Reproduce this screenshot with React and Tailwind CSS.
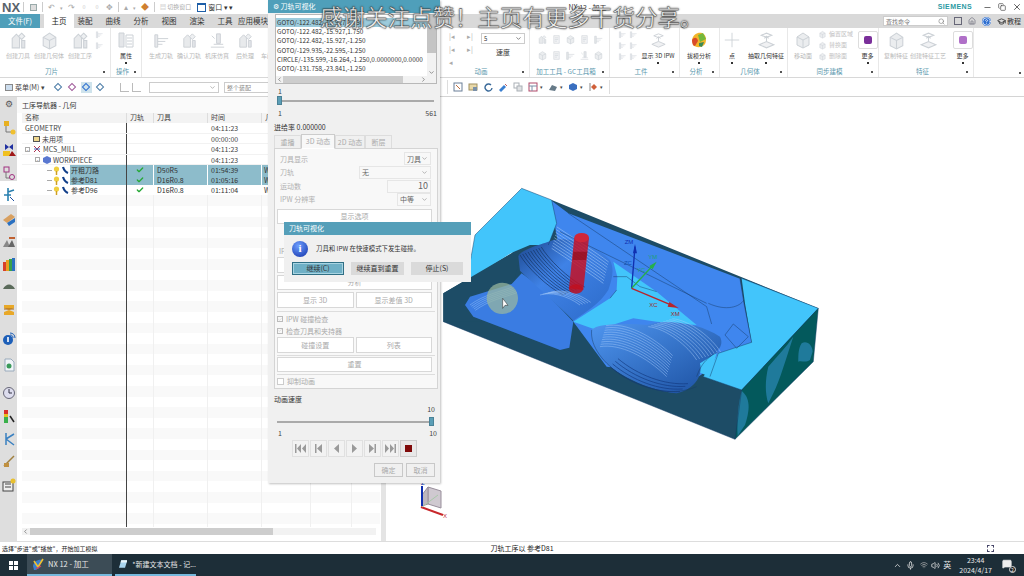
import { ChevronUp, Mic, Wifi, Volume2, MessageSquare, Minus, X, Copy, Search, HelpCircle, Home, GraduationCap, ChevronDown, ChevronLeft, ChevronRight, Check } from 'lucide-react';

const FONT = 'font-["Noto_Sans_CJK_SC","Noto_Sans",sans-serif]';

// pale disabled ribbon glyphs
function Glyph({ kind = 'tool', size = 20 }) {
    const c = '#ccd1d6';
    return (
        <svg width={size} height={size} viewBox="0 0 20 20" fill="none" stroke={c} strokeWidth="1">
            {kind === 'tool' && <><path d="M4 17V8l4-4 3 3v10z" fill="#e8eaec" /><path d="M13 3l3 3-3 3-3-3z" fill="#eef0f2" /><path d="M13 10v7h3v-7z" fill="#e2e5e8" /></>}
            {kind === 'box' && <><path d="M4 7l6-4 6 4v8l-6 3-6-3z" fill="#ebedef" /><path d="M4 7l6 3 6-3M10 10v8" /></>}
            {kind === 'cut' && <><path d="M3 4h3v13H3z" fill="#e6e8eb" /><path d="M6 8h11M6 11h8M6 14h5" /></>}
            {kind === 'sim' && <><path d="M9 3h4v10H9z" fill="#e4e6e9" /><path d="M3 17h14M6 14h10" /><path d="M4 5l3 3" /></>}
            {kind === 'doc' && <><path d="M5 3h10v14H5z" fill="#f2f3f5" /><path d="M7 7h6M7 10h6M7 13h4" /></>}
            {kind === 'plus' && <path d="M10 2v16M2 10h16" />}
            {kind === 'lift' && <><path d="M3 14l7-3 7 3-7 3z" fill="#f0f1f3" /><path d="M10 11V6M8 8l2-2 2 2" /><path d="M5 5l5-2 5 2-5 2z" /></>}
            {kind === 'prop' && <><path d="M3 3h5v14H3z" fill="#e4e6e9" /><path d="M10 5h7v12h-7z" /><path d="M11 8h5M11 11h5M11 14h5" /></>}
        </svg>
    );
}

function Big({ w, label, kind, size, off, arrow, children }) {
    return (
        <div className="flex flex-col items-center shrink-0 h-full pt-[1px]" style={{ width: w }}>
            <div className="h-[22px] flex items-center justify-center">{children || <Glyph kind={kind} size={size} />}</div>
            <div className={`text-[6px] leading-[9px] whitespace-nowrap ${off ? 'text-[#b8b8b8]' : 'text-[#333]'}`}>{label}</div>
            {arrow && <div className="w-[2px] h-[2px] bg-[#333] mt-[2px]" />}
        </div>
    );
}

function Section({ w, label, children, wide }) {
    return (
        <div className="flex flex-col shrink-0 h-full border-r border-[#e8e8e8]" style={{ width: w }}>
            <div className="h-[38px] flex items-start">{children}</div>
            <div className="h-[11px] flex items-center relative">
                <span className={`flex-1 text-center text-[6.5px] leading-[9px] text-[#5a97ad] ${wide ? 'whitespace-nowrap' : ''}`}>{label}</span>
                <span className="w-[2px] h-[2px] bg-[#555] mr-[5px]" />
            </div>
        </div>
    );
}

function MoreBox({ color }) {
    return (
        <div className="w-[20px] h-[18px] border border-[#ddd] rounded-[2px] flex items-center justify-center">
            <div className="w-[8px] h-[8px] rounded-[2px]" style={{ background: color }} />
        </div>
    );
}

function SmallCol({ n = 3 }) {
    return (
        <div className="flex flex-col gap-[2px] pt-[2px]">
            {Array.from({ length: n }).map((_, i) => (<Glyph key={i} kind="cut" size={9} />))}
        </div>
    );
}

function Ribbon() {
    return (
        <div className="h-[50px] bg-white flex border-b border-[#d8d8d8]">
            <Section w={111} label="刀片">
                <div className="w-[3px]" />
                <Big w={30} label="创建刀具" kind="tool" size={21} off />
                <Big w={32} label="创建几何体" kind="box" size={21} off />
                <Big w={30} label="创建工序" kind="tool" size={21} off />
                <SmallCol n={2} />
            </Section>
            <Section w={31} label="操作">
                <Big w={30} label="属性" kind="prop" size={20} arrow />
            </Section>
            <Section w={298} label="工序">
                <div className="w-[5px]" />
                <Big w={28} label="生成刀轨" kind="cut" size={19} off />
                <Big w={28} label="确认刀轨" kind="tool" size={19} off />
                <Big w={28} label="机床仿真" kind="sim" size={19} off />
                <Big w={28} label="后处理" kind="tool" size={19} off />
                <Big w={28} label="车间文档" kind="doc" size={19} off />
            </Section>
            <Section w={90} label="动画">
                <div className="w-[11px] pt-[2px] text-[#aaa] text-[7px] leading-[13px] ml-[9px]">|◂<br />|◂<br />◂</div>
                <div className="w-[12px] pt-[2px] text-[#aaa] text-[7px] leading-[13px] ml-[7px]">▸|<br />▸|</div>
                <div className="flex flex-col items-center ml-[2px] pt-[5px]">
                    <div className="w-[44px] h-[11px] border border-[#ccc] flex items-center justify-between px-[2px] text-[6px] text-[#333]">5<ChevronDown size={7} /></div>
                    <div className="text-[7px] text-[#333] mt-[3px]">速度</div>
                </div>
            </Section>
            <Section w={80} label="加工工具 - GC工具箱" wide>
                <div className="grid grid-cols-5 gap-x-[3px] gap-y-[5px] pl-[7px] pt-[6px]">
                    {['tool', 'doc', 'box', 'doc', 'cut', 'box', 'doc', 'cut', 'sim', 'box'].map((k, i) => (<Glyph key={i} kind={k} size={11} />))}
                </div>
            </Section>
            <Section w={70} label="工件">
                <div className="flex flex-col ml-[8px]"><SmallCol /></div>
                <div className="flex flex-col ml-[2px]"><SmallCol /></div>
                <Big w={40} label="显示 3D IPW" kind="lift" size={19} arrow />
            </Section>
            <Section w={40} label="分析">
                <Big w={38} label="拔模分析" arrow>
                    <svg width="18" height="18" viewBox="0 0 18 18">
                        <path d="M2 9C3 3 8 1 12 2c4 2 5 6 3 11-3 4-9 4-12 1z" fill="#f2b52a" />
                        <path d="M2 9c2-3 5-3 6 1l-3 5c-2 0-3-3-3-6z" fill="#d94b2b" />
                        <path d="M8 4l5-2 3 6-6 3z" fill="#74b83c" />
                        <path d="M9 12l5-1-2 5-3-1z" fill="#3a8a58" />
                    </svg>
                </Big>
            </Section>
            <Section w={68} label="几何体">
                <Big w={24} label="点" kind="plus" size={18} arrow />
                <Big w={44} label="抽取几何特征" kind="lift" size={21} arrow />
            </Section>
            <Section w={91} label="同步建模">
                <Big w={30} label="移动面" kind="box" size={20} off />
                <div className="flex flex-col gap-[1px] pt-[1px] w-[40px]">
                    {['偏置区域', '替换面', '删除面'].map((t) => (
                        <div key={t} className="flex items-center gap-[2px] text-[6px] leading-[10px] text-[#c4c4c4] whitespace-nowrap"><Glyph kind="box" size={9} />{t}</div>
                    ))}
                </div>
                <Big w={21} label="更多" arrow><MoreBox color="#7a2f9a" /></Big>
            </Section>
            <Section w={95} label="特征">
                <Big w={34} label="复制特征" kind="box" size={21} off />
                <Big w={30} label="创建特征工艺" kind="lift" size={21} off />
                <div className="w-[10px]" />
                <Big w={21} label="更多" arrow><MoreBox color="#b070c8" /></Big>
            </Section>
            <div className="flex-1 flex items-end justify-end pr-[3px] pb-[3px]"><span className="w-[2px] h-[2px] bg-[#555]" /></div>
        </div>
    );
}

function Top() {
    return (
        <>
            <div className="h-[14px] bg-white flex items-center relative">
                <span className='font-["Liberation_Sans",sans-serif] font-bold text-[13px] text-[#59636b] ml-[2px] w-[19px] leading-none'>NX</span>
                <div className="w-px h-[10px] bg-[#ccc] ml-[2px]" />
                <div className="flex items-center gap-[5px] ml-[6px] text-[#aaa] text-[8px] leading-none">
                    <span className="w-[7px] h-[7px] border border-[#9aa] bg-[#ddd]" />
                    <div className="w-px h-[10px] bg-[#ccc]" />
                    <span>↶</span><span className="text-[5px]">▾</span><span>↷</span><span>▫</span><span>▫</span><span>✥</span>
                    <div className="w-px h-[10px] bg-[#ccc]" />
                    <span>▴</span><span className="text-[5px]">▾</span><span className="text-[#d08030]">◆</span>
                    <div className="w-px h-[10px] bg-[#ccc]" />
                    <span className="text-[6px] whitespace-nowrap">▤ 切换窗口</span>
                </div>
                <span className="w-[9px] h-[9px] border border-[#1d5ea8] border-t-2 ml-[6px]" />
                <span className="text-[7px] text-[#333] ml-[2px] whitespace-nowrap">窗口 ▾ ▾</span>
                <span className="text-[7px] text-[#333] ml-[335px] whitespace-nowrap">NX 12 - 加工</span>
                <span className='font-["Liberation_Sans",sans-serif] font-bold text-[7px] tracking-[0.4px] text-[#2a9aa3] ml-auto mr-[11px]'>SIEMENS</span>
                <Minus size={9} className="text-[#444] mr-[6px]" />
                <Copy size={8} className="text-[#444] mr-[6px]" />
                <X size={10} className="text-[#444] mr-[2px]" />
            </div>
            <div className="h-[14px] bg-[#d9d9d9] flex items-stretch text-[7.5px] text-[#333]">
                <div className="w-[40px] bg-[#4f9fba] text-white flex items-center justify-center">文件(F)</div>
                <div className="w-[30px] ml-[4px] mr-[-3px] bg-white text-[#222] flex items-center justify-center">主页</div>
                {['装配', '曲线', '分析', '视图', '渲染', '工具', '应用模块'].map((t) => (
                    <div key={t} className="w-[28px] flex items-center justify-center whitespace-nowrap">{t}</div>
                ))}
                <div className="ml-auto flex items-center pr-[3px] gap-[6px]">
                    <div className="w-[65px] h-[10px] bg-white border border-[#ccc] flex items-center justify-between px-[2px] text-[6px] text-[#777]">查找命令<Search size={7} /></div>
                    <span className="w-[8px] h-[8px] border border-[#667]" />
                    <Home size={8} className="text-[#667]" />
                    <HelpCircle size={9} className="text-white bg-[#2f6fd0] rounded-full" />
                    <span className="flex items-center gap-[1px] text-[7px]"><GraduationCap size={9} className="text-[#222]" />教程</span>
                </div>
            </div>
        </>
    );
}

// right-hand view toolbar glyphs
const VIEW_ICONS = [
    { arrow: false, draw: <><rect x="1" y="1" width="8" height="8" fill="none" stroke="#6a7f98" /><path d="M3 3l4 4" stroke="#c07040" /></> },
    { arrow: false, draw: <><rect x="1" y="2" width="8" height="6" fill="#e8d8a8" stroke="#a09060" /><rect x="5" y="5" width="4" height="4" fill="#7a90a8" /></> },
    { arrow: false, draw: <path d="M8 3a3.5 3.5 0 1 0 1 3" fill="none" stroke="#3a6a9a" strokeWidth="1.4" /> },
    { arrow: false, draw: <><path d="M1 8l5-5 2 2-5 5z" fill="#3a7fd0" /><path d="M7 2l2 2" stroke="#c06060" /></> },
    { arrow: false, draw: <><rect x="1" y="1" width="5" height="5" fill="none" stroke="#aab0b6" /><rect x="4" y="4" width="5" height="5" fill="#e0e2e4" stroke="#aab0b6" /></> },
    { arrow: true, draw: <><rect x="1" y="1" width="8" height="8" fill="none" stroke="#b04a6a" /><path d="M1 4h8M4 4v5" stroke="#7a90a8" /></> },
    { arrow: true, draw: <path d="M1 8l3-5 5 2-2 4z" fill="#667a88" /> },
    { arrow: true, draw: <path d="M5 1l4 2v4l-4 2-4-2V3z" fill="#3a6fc0" /> },
    { arrow: true, draw: <><path d="M2 1v8" stroke="#888" /><path d="M3 5l3-3 3 3-3 3z" fill="#d0603a" /></> },
];

function Toolbar() {
    const ic = ['#4a7ba6', '#a05a9a', '#2f6fd0', '#4a7ba6'];
    return (
        <div className="h-[19px] bg-white flex items-center border-b border-[#d4d4d4] text-[7px] text-[#444]">
            <span className="ml-[5px] flex items-center gap-[2px] whitespace-nowrap"><span className="w-[8px] h-[7px] border border-[#888] bg-[#cde]" />菜单(M) ▾</span>
            <div className="flex items-center gap-[3px] ml-[8px]">
                {ic.map((c, i) => (
                    <span key={i} className={`w-[11px] h-[11px] flex items-center justify-center ${i === 2 ? 'bg-[#cfe3ec]' : ''}`}><span className="w-[6px] h-[6px] rotate-45 border" style={{ borderColor: c }} /></span>
                ))}
                <div className="w-[8px]" />
                <span className="w-[9px] h-[9px] border-l border-b border-[#bbb]" />
                <span className="w-[9px] h-[9px] border-l border-b border-[#bbb]" />
            </div>
            <div className="w-[70px] h-[11px] border border-[#ccc] ml-[8px] flex items-center justify-end pr-[2px]"><ChevronDown size={7} className="text-[#888]" /></div>
            <div className="w-[46px] h-[11px] border border-[#ccc] ml-[5px] text-[6px] px-[2px] text-[#888] leading-[9px]">整个装配</div>
            <div className="ml-[177px] flex items-center gap-[5px]">
                <div className="w-px h-[14px] bg-[#ddd]" />
                {VIEW_ICONS.map((ico, i) => (
                    <span key={i} className="flex items-center gap-[2px]">
                        <svg width="10" height="10" viewBox="0 0 10 10">{ico.draw}</svg>
                        {ico.arrow && <span className="text-[5px]">▾</span>}
                    </span>
                ))}
            </div>
            <div className="w-px h-[14px] bg-[#ddd] ml-[6px]" />
        </div>
    );
}

// left rail of small resource icons
function RailIcon({ i }) {
    const draw = [
        <><rect x="2" y="1" width="5" height="5" fill="#e8b020" /><path d="M4 6v6h5" stroke="#777" fill="none" /><circle cx="11" cy="12" r="2.5" fill="#f0c030" /></>,
        <><path d="M3 1l4 3 4-3v6l-4-3-4 3z" fill="#2030a0" /><rect x="1" y="8" width="7" height="5" fill="#f0c020" /><path d="M7 13l3-5 4 5z" fill="#a01818" /></>,
        <><rect x="2" y="1" width="5" height="5" fill="none" stroke="#a03080" /><path d="M4 6v6h4" stroke="#777" fill="none" /><circle cx="10" cy="11" r="2.5" fill="none" stroke="#a03080" /></>,
        <><path d="M6 1v13M6 5l6-2M2 8h7" stroke="#2a80b0" strokeWidth="1.6" fill="none" /><path d="M8 10l4 4" stroke="#2050a0" fill="none" /></>,
        <><path d="M1 8l8-6 4 3-8 6z" fill="#d8a060" /><path d="M5 11l8-5v4l-6 4z" fill="#2a70c0" /></>,
        <><path d="M1 13l4-7 3 7z" fill="#888" /><path d="M6 13l4-7 3 7z" fill="#666" /><path d="M7 4h6" stroke="#c06030" strokeWidth="2" /></>,
        <><rect x="1" y="5" width="3" height="9" fill="#d8402a" /><rect x="4" y="3" width="3" height="11" fill="#e8a020" /><rect x="7" y="2" width="3" height="12" fill="#3aa04a" /><rect x="10" y="1" width="3" height="13" fill="#2a70c0" /></>,
        <path d="M1 10c3-6 9-6 12 0z" fill="#5a6a5a" />,
        <><path d="M2 2h10v3L7 7l5 2v3H2V9l5-2-5-2z" fill="#e8a828" /><path d="M2 6h10" stroke="#a06018" /></>,
        <><circle cx="6" cy="9" r="5" fill="#1d5fb8" /><path d="M6 6v5" stroke="#fff" strokeWidth="1.6" /><path d="M8 2c3 0 5 2 5 5M8 4c2 0 3 1 3 3" stroke="#1d5fb8" fill="none" /></>,
        <><path d="M3 1h6l3 3v9H3z" fill="#f0f4f8" stroke="#9ab" /><circle cx="7" cy="8" r="2.5" fill="#3a9a5a" /></>,
        <><circle cx="7" cy="7" r="5.5" fill="#dde" stroke="#667" /><path d="M7 3v4h3" stroke="#334" fill="none" /></>,
        <><path d="M2 1h4v13H2z" fill="#3ab04a" /><path d="M2 1h4v4H2z" fill="#d8302a" /><path d="M2 5h4v3H2z" fill="#e8c020" /><path d="M8 7l4 6" stroke="#222" strokeWidth="1.5" /></>,
        <><path d="M4 1v12M4 7l8-5M4 7l8 6" stroke="#3a80c0" strokeWidth="1.5" fill="none" /></>,
        <><path d="M2 12l6-6 4-4" stroke="#a08040" strokeWidth="1.5" fill="none" /><path d="M2 9h5v4H2z" fill="#c09040" /></>,
        <><rect x="1" y="4" width="10" height="9" fill="#eee" stroke="#444" /><path d="M3 6h6M3 9h6" stroke="#444" /><circle cx="11" cy="3" r="2.5" fill="#e8c030" /></>,
    ][i];
    return <svg width="14" height="15" viewBox="0 0 14 15">{draw}</svg>;
}

function Rail() {
    const gaps = [135, 158, 181, 205, 227, 249, 272, 294, 318, 346, 373, 401, 424, 447, 469, 493];
    return (
        <div className="w-[17px] shrink-0 bg-[#dedede] flex flex-col items-center">
            <div className="h-[13px] flex items-center text-[#555] text-[9px] leading-none">⚙</div>
            {gaps.map((y, i) => (
                <div key={y} className={`w-full flex items-end justify-center ${i === 3 ? 'bg-white pb-[3px]' : ''}`} style={{ height: i === 0 ? y - 110 : y - gaps[i - 1] }}>
                    <RailIcon i={i} />
                </div>
            ))}
        </div>
    );
}

const OPS = [
    { name: '开粗刀路', tool: 'D50R5', time: '01:54:39', sel: true },
    { name: '参考D81', tool: 'D16R0.8', time: '01:05:16', sel: true },
    { name: '参考D96', tool: 'D16R0.8', time: '01:11:04', sel: false },
];
const COLS = 'grid grid-cols-[105px_27px_54px_54px_49px_41px_1fr]';

function Tree({ label, time, indent, icon, minus }) {
    return (
        <div className={`${COLS} h-[10.6px] text-[7px] leading-[10px] text-[#444] border-b border-[#f2f2f2]`}>
            <div className="border-r border-[#444] flex items-center whitespace-nowrap" style={{ paddingLeft: indent }}>
                {minus && <span className="w-[5px] h-[5px] border border-[#aaa] flex items-center justify-center text-[5px] leading-none mr-[3px]">-</span>}
                {icon}
                <span className="ml-[2px]">{label}</span>
            </div>
            <div /><div />
            <div className="pl-[3px]">{time}</div>
        </div>
    );
}

function OpRow({ op }) {
    const cell = op.sel ? 'bg-[#8dbccb]' : '';
    return (
        <div className={`${COLS} h-[10.6px] text-[7px] leading-[10px] text-[#333] gap-x-0`}>
            <div className="border-r border-[#444] flex items-center pl-[25px]">
                <span className="w-[5px] h-px bg-[#aaa]" />
                <svg width="7" height="9" viewBox="0 0 7 9" className="ml-[1px]"><circle cx="3.5" cy="3" r="2.6" fill="#f0d040" /><path d="M3.5 5v4" stroke="#d0a020" strokeWidth="1.5" /></svg>
                <svg width="8" height="9" viewBox="0 0 8 9" className="ml-[1px] mr-[1px]"><path d="M2 1c1 3 2 5 5 6" stroke="#123f8a" strokeWidth="2.2" fill="none" /></svg>
                <span className={`flex-1 self-stretch pl-[1px] whitespace-nowrap ${cell}`}>{op.name}</span>
            </div>
            <div className={`flex items-center justify-center border-r border-white ${cell}`}><Check size={8} strokeWidth={4} className="text-[#27a838]" /></div>
            <div className={`pl-[3px] border-r border-white ${cell}`}>{op.tool}</div>
            <div className={`pl-[3px] border-r border-white ${cell}`}>{op.time}</div>
            <div className={`pl-[2px] ${cell}`}>W</div>
            <div className={cell} /><div className={cell} />
        </div>
    );
}

function Navigator() {
    return (
        <div className="w-[364px] shrink-0 bg-white flex flex-col">
            <div className="h-[16px] pl-[5px] flex items-center text-[7px] text-[#333] bg-[#fafafa]">工序导航器 - 几何</div>
            <div className="pl-[5px] pr-[1px] flex-1 flex flex-col overflow-hidden">
                <div className={`${COLS} h-[10px] text-[7px] leading-[9px] text-[#444] bg-[#f3f3f3] shrink-0`}>
                    {['名称', '刀轨', '刀具', '时间', '几何', '方法', ''].map((t, i) => (
                        <div key={i} className="pl-[3px] border-r border-[#ddd] whitespace-nowrap">{t}</div>
                    ))}
                </div>
                <Tree label="GEOMETRY" time="04:11:23" indent={1} />
                <Tree label="未用项" time="00:00:00" indent={11} icon={<span className="w-[7px] h-[6px] bg-[#f0d890] border border-[#555]" />} />
                <Tree label="MCS_MILL" time="04:11:23" indent={3} minus icon={<svg width="8" height="8" viewBox="0 0 8 8"><path d="M1 1l6 6M1 7l6-6" stroke="#b03050" /><path d="M1 4h6" stroke="#3a70c0" /></svg>} />
                <Tree label="WORKPIECE" time="04:11:23" indent={13} minus icon={<svg width="8" height="8" viewBox="0 0 8 8"><path d="M4 0l4 2v4L4 8 0 6V2z" fill="#5a78d0" /></svg>} />
                {OPS.map((op) => (<OpRow key={op.name} op={op} />))}
                {Array.from({ length: 32 }).map((_, i) => (
                    <div key={i} className={`${COLS} h-[10.6px] shrink-0 ${i % 2 ? 'bg-white' : 'bg-[#f9f9f9]'}`}>
                        <div className="border-r border-[#444]" /><div className="border-r border-[#f0f0f0]" /><div className="border-r border-[#f0f0f0]" /><div className="border-r border-[#f0f0f0]" /><div className="border-r border-[#f0f0f0]" /><div className="border-r border-[#f0f0f0]" />
                    </div>
                ))}
            </div>
            <div className="h-[7px] mx-[5px] mt-[1px] mb-[6px] bg-[#f2f2f2] flex items-center">
                <ChevronLeft size={7} className="text-[#555]" />
                <div className="h-full w-[243px] bg-[#cdcdcd] ml-[1px]" />
            </div>
        </div>
    );
}

function Model() {
    const ridge = (d, n, dx, dy, col, w = 1) => Array.from({ length: n }).map((_, i) => (
        <path key={i} d={d} transform={`translate(${i * dx} ${i * dy})`} stroke={col} strokeWidth={w} fill="none" />
    ));
    return (
        <svg className="w-full h-full block" viewBox="386 97 638 444">
            <defs>
                <linearGradient id="moundA" x1="0" y1="0" x2="1" y2="1"><stop offset="0" stopColor="#1c468c" /><stop offset=".4" stopColor="#3f82e6" /><stop offset="1" stopColor="#2c6ac8" /></linearGradient>
                <linearGradient id="moundB" x1="0" y1="0" x2="1" y2="1"><stop offset="0" stopColor="#4f96f0" /><stop offset="1" stopColor="#1b4f9f" /></linearGradient>
            </defs>
            <g transform="translate(440 180) scale(0.3333)">
                {/* block faces */}
                <path d="M10 340 L215 220 L335 60 L1135 385 L885 778 L10 425Z" fill="#1d4c66" />
                <path d="M335 62 L385 100 L900 296 L912 370 L935 487 L860 530 L775 590 L500 560 L400 425 L345 140Z" fill="#3f86ee" />
                <path d="M245 25 L335 60 L350 130 L325 195 L270 195 L215 218 L80 305 L105 165Z" fill="#42c5fb" />
                <path d="M905 295 L1135 385 L905 630 L790 590 L812 560 L835 520 L935 487 L915 370Z" fill="#42c5fb" />
                <path d="M520 245 L650 335 L770 435 L650 425 L580 415 L470 450 L400 425 L510 355 L530 330 L532 290Z" fill="#42c5fb" />
                <path d="M775 540 L830 520 L808 590 L775 575Z" fill="#42c5fb" />
                <path d="M1135 385 L1120 545 L885 778 L905 630Z" fill="#03595c" />
                <path d="M905 632 C925 650 935 675 915 735 L893 768 C890 720 895 670 905 632Z" fill="#1f7a9b" />
                <path d="M985 560 C1010 530 1040 500 1060 470 C1040 530 1020 600 1000 640 L985 670 C975 640 975 600 985 560Z" fill="#1f7a9b" />
                <path d="M1085 490 C1100 480 1118 495 1118 515 L1110 540 C1095 550 1085 540 1075 545 C1075 525 1075 505 1085 490Z" fill="#1f7a9b" />
                {/* left pocket */}
                <path d="M10 340 L215 220 L240 235 L220 310 L85 365 L75 375 L100 410 L360 510 L385 505 L400 425 L10 425Z" fill="#1d4c66" />
                <path d="M75 375 L90 350 L215 312 L245 280 L300 320 L400 425 L388 503 L360 510 L100 410Z" fill="#3a7ce2" />
                {ridge('M90 375 C130 345 180 335 215 322', 5, 4, 4, '#8dbcf7', 1.6)}
                {/* mound one */}
                <path d="M235 228 C250 205 300 195 340 180 C400 170 470 200 510 240 C525 270 515 300 505 330 C480 370 440 395 400 422 C360 380 280 310 240 272Z" fill="url(#moundA)" />
                {ridge('M240 225 C260 260 320 320 370 345', 9, 8, -3, '#12305f', 2)}
                {ridge('M335 205 C380 235 450 280 490 310', 9, 2, -8, '#a9cdfa', 1.6)}
                {ridge('M300 345 C330 335 380 345 420 375', 5, 8, -2, '#9fc6f8', 1.6)}
                {/* mound two */}
                <path d="M455 450 C470 430 560 430 620 435 C680 415 780 430 840 470 C855 500 830 520 780 550 C790 590 760 630 710 640 C620 630 520 580 480 530 C460 500 452 480 455 450Z" fill="url(#moundB)" />
                {ridge('M480 500 C540 490 620 530 680 590', 10, 2, -7, '#9cc5f8', 1.5)}
                {ridge('M625 440 C680 445 745 500 770 540', 9, 9, -3, '#a9cdfa', 1.4)}
                {ridge('M510 560 C570 610 650 640 720 635', 4, 8, -8, '#123a80', 2)}
                {/* edge lines */}
                <g stroke="#163a66" strokeWidth="1.4" fill="none">
                    <path d="M245 25 L105 165 L80 305 M245 25 L335 60 L350 130 L325 195" />
                    <path d="M385 100 L800 380 L815 432 M360 155 L800 370" />
                    <path d="M905 295 L1135 385 L905 630 L790 590" />
                    <path d="M900 296 L912 370 L935 487 L835 520 L810 590" />
                    <path d="M855 465 L880 432 L925 470 L890 505Z" />
                    <path d="M805 370 C860 395 900 380 912 360" />
                    <path d="M10 425 L885 778 L1120 545 L1135 385 M885 778 L905 630" />
                    <path d="M520 290 L560 290 L600 320 L650 335 M510 355 L530 330" />
                    <path d="M770 590 C790 530 830 520 835 515" />
                    <path d="M455 450 C450 500 490 550 550 590 C620 630 700 650 770 620" />
                </g>
                {/* tool */}
                <path d="M403 173 L447 173 L430 330 L387 325Z" fill="#c90d1f" opacity=".82" />
                <path d="M400 215 L442 215 L438 240 L398 240Z" fill="#8c0a18" opacity=".6" />
                <ellipse cx="425" cy="173" rx="22" ry="14" fill="#d0263a" />
                <ellipse cx="408" cy="327" rx="21" ry="14" fill="#c01020" opacity=".85" />
                {/* axes */}
                <path d="M575 325 L585 200" stroke="#1030b0" strokeWidth="4" />
                <path d="M585 192 L579 220 L591 220Z" fill="#1030b0" />
                <path d="M575 325 L640 255" stroke="#26b04a" strokeWidth="4" />
                <path d="M650 245 L628 258 L638 268Z" fill="#26b04a" />
                <path d="M575 325 L700 378" stroke="#b8242c" strokeWidth="4" />
                <path d="M716 384 L688 366 L683 380Z" fill="#b8242c" />
                <g className='font-["Liberation_Sans",sans-serif]' fontSize="18">
                    <text x="554" y="192" fill="#1030b0">ZM</text>
                    <text x="552" y="254" fill="#1050b0">ZC</text>
                    <text x="625" y="236" fill="#20a078">YM</text>
                    <text x="590" y="275" fill="#20a078">YC</text>
                    <text x="628" y="380" fill="#a02a30">XC</text>
                    <text x="692" y="408" fill="#a02a30">XM</text>
                </g>
                {/* mouse highlight */}
                <circle cx="187" cy="355" r="47" fill="#9ab8a0" opacity=".72" />
                <path d="M188 355 L188 385 L195 376 L204 376Z" fill="#fff" stroke="#222" strokeWidth="1.5" />
            </g>
            {/* view triad */}
            <path d="M428 487 L441 491 L441 508 L428 504Z" fill="#cfc9d0" stroke="#998f9c" />
            <path d="M428 487 L422 495 L422 506 L428 504Z" fill="#bdb7be" stroke="#998f9c" />
            <path d="M422 506 L422 486" stroke="#1030b0" strokeWidth="2" />
            <path d="M421 507 L443 515" stroke="#c8282c" strokeWidth="2" />
            <path d="M422 507 L438 495" stroke="#a8c8a8" />
            <text x="443" y="518" fontSize="6" fill="#c03038" className='font-["Liberation_Sans",sans-serif]'>X</text>
            <text x="421" y="485" fontSize="6" fill="#1030b0" className='font-["Liberation_Sans",sans-serif]'>Z</text>
        </svg>
    );
}

function PlainBtn({ label, className = '' }) {
    return <div className={`h-[16px] border border-[#d8d8d8] bg-white flex items-center justify-center text-[7px] text-[#aaa] ${className}`}>{label}</div>;
}

function FieldRow({ label, boxW, value, select }) {
    return (
        <div className="h-[14px] flex items-center justify-between pl-[3px] pr-[4px] text-[7px] text-[#b0b0b0]">
            <span>{label}</span>
            <div className="h-[13px] border border-[#e6e6e6] flex items-center justify-between px-[2px] text-[#666]" style={{ width: boxW }}>
                <span className={select ? '' : 'ml-auto text-[9px]'}>{value}</span>
                {select && <ChevronDown size={7} className="text-[#888]" />}
            </div>
        </div>
    );
}

function Slider({ atEnd }) {
    return (
        <div className="relative h-[9px] ml-[9px] mr-[6px] flex items-center">
            <div className="h-[2px] w-full bg-[#aaa]" />
            <div className={`absolute top-0 w-[5px] h-[9px] bg-[#5b9eb6] border border-[#4a8297] ${atEnd ? 'right-0' : 'left-0'}`} />
        </div>
    );
}

function MediaBtn({ d, stop }) {
    return (
        <div className={`w-[17px] h-[17px] border flex items-center justify-center ${stop ? 'border-[#ccc] bg-[#e8e8e8]' : 'border-[#e0e0e0] bg-[#f2f2f2]'}`}>
            {stop
                ? <span className="w-[7px] h-[7px] bg-[#7f0a0a]" />
                : <svg width="11" height="9" viewBox="0 0 11 9" fill="#9a9a9a">{d}</svg>}
        </div>
    );
}

function PlayerDialog() {
    const lines = ['GOTO/-122.482,-15.927,2.750', 'GOTO/-122.482,-15.927,1.750', 'GOTO/-122.482,-15.927,-1.250', 'GOTO/-129.935,-22.595,-1.250', 'CIRCLE/-135.599,-16.264,-1.250,0.0000000,0.0000', 'GOTO/-131.758,-23.841,-1.250'];
    const media = [
        <><path d="M0 0h1.5v9H0zM6 0v9L2 4.5zM11 0v9L7 4.5z" /></>,
        <><path d="M2 0h1.5v9H2zM9 0v9L4 4.5z" /></>,
        <path d="M8 0v9L3 4.5z" />,
        <path d="M3 0v9l5-4.5z" />,
        <path d="M2 0v9l5-4.5zM7.5 0H9v9H7.5z" />,
        <path d="M0 0v9l4-4.5zM5 0v9l4-4.5zM9.5 0H11v9H9.5z" />,
    ];
    return (
        <div className={`absolute left-[268px] top-0 w-[172px] h-[483px] bg-[#f0f0f0] flex flex-col ${FONT} shadow-[1px_1px_2px_rgba(0,0,0,.25)]`}>
            <div className="h-[13px] bg-[#4f9fba] flex items-center text-[7px] text-white pl-[5px] gap-[3px] shrink-0">⚙ 刀轨可视化</div>
            <div className="mx-[7px] mt-[1px] mr-[3px] h-[70px] bg-white border border-[#b8b8b8] flex flex-col shrink-0">
                <div className="flex flex-1 min-h-0">
                    <div className="flex-1 overflow-hidden pt-[3px]">
                        {lines.map((l, i) => (
                            <div key={l} className={`h-[9.2px] text-[6.4px] leading-[9px] whitespace-nowrap text-[#333] pl-[1px] ${i === 0 ? 'bg-[#9ccbdc]' : ''}`}>{l}</div>
                        ))}
                    </div>
                    <div className="w-[9px] bg-[#f2f2f2] flex flex-col items-center">
                        <div className="w-full h-[38px] bg-[#c4c4c4]" />
                        <ChevronDown size={7} className="mt-auto text-[#555]" />
                    </div>
                </div>
                <div className="h-[7px] bg-[#f2f2f2] flex items-center justify-between">
                    <ChevronLeft size={7} className="text-[#555]" />
                    <div className="h-full w-[120px] bg-[#cdcdcd] mr-auto" />
                    <ChevronRight size={7} className="text-[#555] mr-[9px]" />
                </div>
            </div>
            <div className="pl-[10px] text-[7px] leading-[9px] mt-[3px] text-[#444]">1</div>
            <Slider />
            <div className="flex justify-between pl-[10px] pr-[3px] text-[7px] leading-[9px] text-[#444] mt-[4px]"><span>1</span><span>561</span></div>
            <div className="pl-[6px] mt-[5px] text-[7px] leading-[9px] text-[#333]">进给率 0.000000</div>
            <div className="flex ml-[6px] mt-[2px] h-[15px] text-[7px] text-[#aaa] shrink-0">
                <div className="w-[27px] mt-[1px] border border-[#ddd] flex items-center justify-center">重播</div>
                <div className="w-[34px] border border-[#ccc] border-b-white bg-[#f8f8f8] z-10 flex items-center justify-center whitespace-nowrap">3D 动态</div>
                <div className="w-[30px] mt-[1px] border border-[#ddd] flex items-center justify-center whitespace-nowrap">2D 动态</div>
                <div className="w-[27px] mt-[1px] border border-[#ddd] flex items-center justify-center">断层</div>
            </div>
            <div className="ml-[6px] mr-[2px] -mt-px h-[241px] border border-[#d4d4d4] bg-[#f8f8f8] flex flex-col px-[2px] pt-[3px] shrink-0">
                <FieldRow label="刀具显示" boxW={27} value="刀具" select />
                <FieldRow label="刀轨" boxW={72} value="无" select />
                <FieldRow label="运动数" boxW={44} value="10" />
                <FieldRow label="IPW 分辨率" boxW={34} value="中等" select />
                <PlainBtn label="显示选项" className="mt-[2px] mr-[3px]" />
                <div className="h-[22px]" />
                <div className="h-[12px] pl-[2px] text-[7px] text-[#aaa]">IPW 碰撞</div>
                <PlainBtn label="" className="mr-[3px]" />
                <PlainBtn label="分析" className="mt-[2px] mr-[3px]" />
                <div className="flex gap-[2px] mt-[2px] mr-[3px]"><PlainBtn label="显示 3D" className="flex-1" /><PlainBtn label="显示差值 3D" className="flex-1" /></div>
                <div className="h-px bg-[#ddd] mt-[3px]" />
                <div className="h-[12px] mt-[1px] flex items-center gap-[3px] text-[7px] text-[#aaa]"><span className="w-[6px] h-[6px] border border-[#bbb] flex items-center justify-center"><Check size={5} /></span>IPW 碰撞检查</div>
                <div className="h-[12px] flex items-center gap-[3px] text-[7px] text-[#aaa]"><span className="w-[6px] h-[6px] border border-[#bbb] flex items-center justify-center"><Check size={5} /></span>检查刀具和夹持器</div>
                <div className="flex gap-[2px] mr-[3px]"><PlainBtn label="碰撞设置" className="flex-1" /><PlainBtn label="列表" className="flex-1" /></div>
                <div className="h-px bg-[#ddd] mt-[2px]" />
                <PlainBtn label="重置" className="mt-[1px] mr-[3px]" />
                <div className="h-px bg-[#ddd] mt-[2px]" />
                <div className="h-[13px] flex items-center gap-[3px] text-[7px] text-[#aaa]"><span className="w-[7px] h-[7px] border border-[#ccc] bg-white" />抑制动画</div>
            </div>
            <div className="pl-[6px] mt-[6px] text-[7px] leading-[9px] text-[#333]">动画速度</div>
            <div className="text-right pr-[5px] mt-[1px] text-[7px] leading-[9px] text-[#444]">10</div>
            <div className="mt-[3px]"><Slider atEnd /></div>
            <div className="flex justify-between pl-[10px] pr-[3px] text-[7px] leading-[9px] text-[#444] mt-[3px]"><span>1</span><span>10</span></div>
            <div className="flex justify-center gap-px mt-[2px]">
                {media.map((d, i) => (<MediaBtn key={i} d={d} />))}
                <MediaBtn stop />
            </div>
            <div className="flex justify-end gap-[3px] pr-[5px] mt-[6px]">
                {['确定', '取消'].map((t) => (
                    <div key={t} className="w-[29px] h-[14px] border border-[#c8c8c8] flex items-center justify-center text-[7px] text-[#aaa]">{t}</div>
                ))}
            </div>
        </div>
    );
}

function AlertDialog() {
    return (
        <div className={`absolute left-[284px] top-[222px] w-[187px] h-[60px] bg-[#f0f0f0] flex flex-col ${FONT}`}>
            <div className="h-[13px] bg-[#559fb9] text-white text-[7px] flex items-center pl-[5px]">刀轨可视化</div>
            <div className="flex items-center h-[27px] pl-[8px] gap-[8px]">
                <span className='w-[16px] h-[16px] rounded-full bg-[radial-gradient(circle_at_40%_30%,#6fa0ff,#0f2fa8)] text-white text-[11px] font-bold font-["Liberation_Serif",serif] flex items-center justify-center leading-none'>i</span>
                <span className="text-[6.4px] text-[#333] whitespace-nowrap">刀具和 IPW 在快速模式下发生碰撞。</span>
            </div>
            <div className="flex pl-[8px] gap-[7px] text-[7px] text-[#333]">
                <div className="w-[52px] h-[13px] bg-[#6fb0c6] border border-[#2f6f85] shadow-[inset_0_0_0_1px_#a8d4e2] flex items-center justify-center">继续(C)</div>
                <div className="w-[53px] h-[13px] bg-[#dadada] flex items-center justify-center whitespace-nowrap">继续直到重置</div>
                <div className="w-[52px] h-[13px] bg-[#dadada] flex items-center justify-center">停止(S)</div>
            </div>
        </div>
    );
}

function Taskbar() {
    return (
        <div className="h-[22px] bg-[#1d2e38] flex items-stretch text-[7.5px] text-[#e8e8e8]">
            <div className="w-[27px] flex items-center justify-center">
                <div className="grid grid-cols-2 gap-px w-[9px]">
                    <span className="h-[4px] bg-white" /><span className="h-[4px] bg-white" /><span className="h-[4px] bg-white" /><span className="h-[4px] bg-white" />
                </div>
            </div>
            <div className="w-[85px] bg-[#3c4c56] border-b-2 border-[#76b9dd] flex items-center pl-[5px] gap-[3px]">
                <svg width="13" height="13" viewBox="0 0 13 13"><path d="M1 8c1-5 5-7 10-6-2 1-3 3-3 5 0 3-3 5-6 5z" fill="#3a7fd0" /><path d="M2 3l4 6 5-8" stroke="#f0c030" strokeWidth="1.6" fill="none" /><path d="M4 11l5-3" stroke="#d04060" strokeWidth="1.4" /></svg>
                <span>NX 12 - 加工</span>
            </div>
            <div className="w-[81px] ml-[3px] border-b-2 border-[#76b9dd] flex items-center pl-[4px] gap-[5px] whitespace-nowrap text-[7px]">
                <svg width="11" height="12" viewBox="0 0 11 12"><path d="M3 1h8L8 11H0z" fill="#a8d4ee" /><path d="M3 1h8L10 4H2z" fill="#e8f4fa" /></svg>
                <span>*新建文本文档 - 记...</span>
            </div>
            <div className="ml-auto flex items-center pr-[1px]">
                <ChevronUp size={9} className="mr-[4px]" />
                <Mic size={9} className="mr-[5px]" />
                <Wifi size={8} className="mr-[3px] text-[#b8b8b8]" />
                <Volume2 size={9} className="mr-[3px]" />
                <span className="mr-[8px] text-[8px]">英</span>
                <div className="flex flex-col items-center leading-[10px] text-[7px] mr-[10px]">
                    <span>23:44</span><span>2024/4/17</span>
                </div>
                <div className="relative w-[12px] h-[12px] mr-[9px]">
                    <MessageSquare size={10} fill="#eee" />
                    <span className="absolute right-[-2px] bottom-[-2px] w-[7px] h-[7px] rounded-full bg-[#222] border border-[#ddd] text-[5px] leading-[5px] text-center">2</span>
                </div>
            </div>
        </div>
    );
}

export default function App() {
    return (
        <div className={`relative w-[1024px] h-[576px] overflow-hidden flex flex-col bg-white ${FONT}`}>
            <Top />
            <Ribbon />
            <Toolbar />
            <div className="flex flex-1 min-h-0">
                <Rail />
                <Navigator />
                <div className="w-[5px] shrink-0 bg-[#e4e4e4]" />
                <div className="flex-1 bg-white min-w-0"><Model /></div>
            </div>
            <div className="h-[13px] bg-white border-t border-[#ddd] flex items-center text-[6px] text-[#222] pl-[2px] relative">
                <span>选择"步进"或"播放"，开始加工模拟</span>
                <span className="ml-[393px] text-[7px]">刀轨工序以 参考D81</span>
                <span className="ml-auto mr-[30px] w-[7px] h-[7px] border border-dashed border-[#446]" />
            </div>
            <Taskbar />
            <PlayerDialog />
            <AlertDialog />
            <div className="absolute left-[320px] top-0 text-[22.5px] leading-[32px] text-[#ececec] whitespace-nowrap [-webkit-text-stroke:0.3px_#333] [text-shadow:0_0_2px_#111]">感谢关注点赞！主页有更多干货分享。</div>
        </div>
    );
}
